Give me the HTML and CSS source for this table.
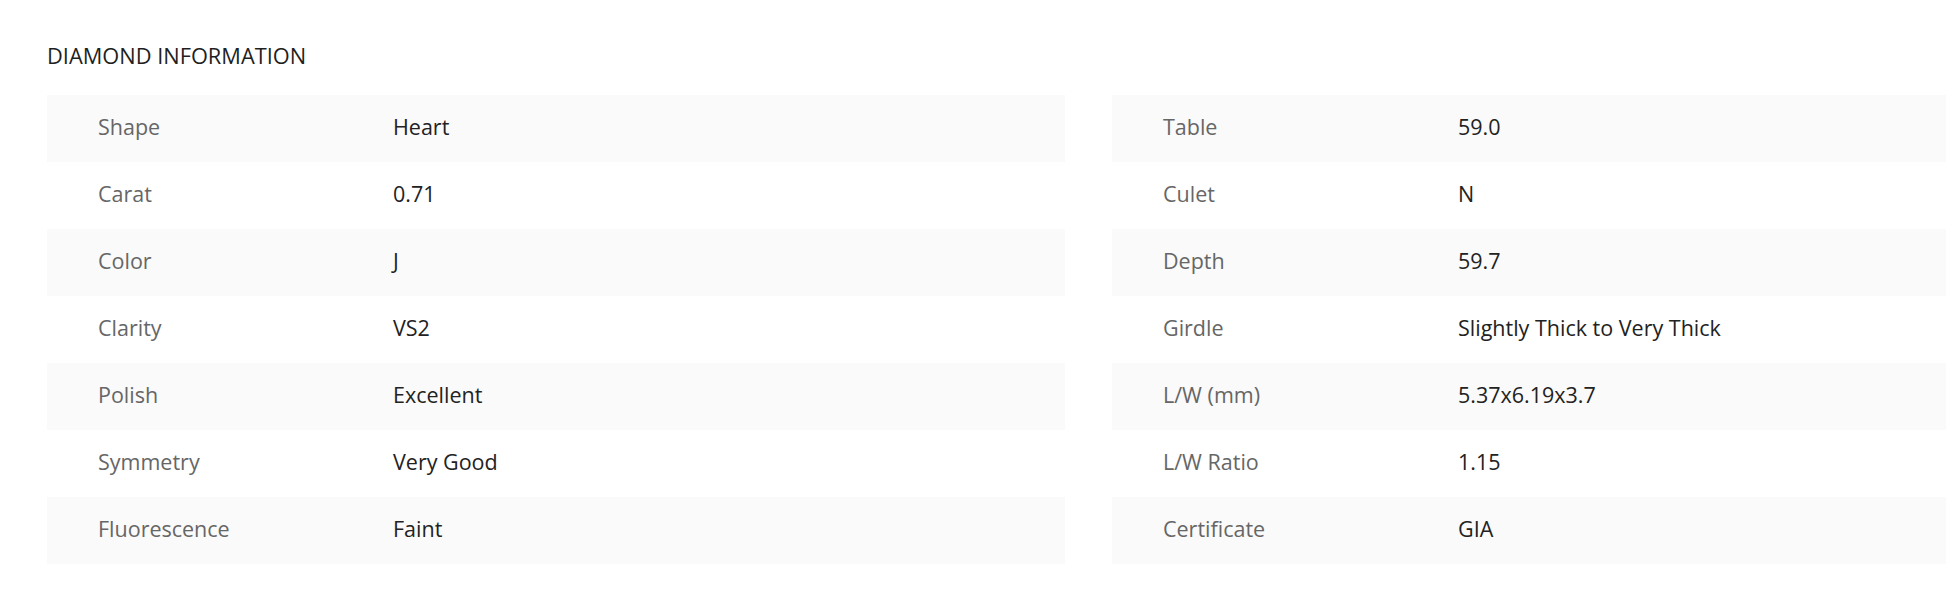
FILE: index.html
```html
<!DOCTYPE html>
<html lang="en">
<head>
<meta charset="utf-8">
<title>Diamond Information</title>
<link rel="stylesheet" href="styles.css">
</head>
<body>
<section class="info">
  <h2 class="info-title">DIAMOND INFORMATION</h2>
  <div class="info-grid">
    <div class="spec-table">
      <div class="spec-row"><span class="spec-label">Shape</span><span class="spec-value">Heart</span></div>
      <div class="spec-row"><span class="spec-label">Carat</span><span class="spec-value">0.71</span></div>
      <div class="spec-row"><span class="spec-label">Color</span><span class="spec-value">J</span></div>
      <div class="spec-row"><span class="spec-label">Clarity</span><span class="spec-value">VS2</span></div>
      <div class="spec-row"><span class="spec-label">Polish</span><span class="spec-value">Excellent</span></div>
      <div class="spec-row"><span class="spec-label">Symmetry</span><span class="spec-value">Very Good</span></div>
      <div class="spec-row"><span class="spec-label">Fluorescence</span><span class="spec-value">Faint</span></div>
    </div>
    <div class="spec-table">
      <div class="spec-row"><span class="spec-label">Table</span><span class="spec-value">59.0</span></div>
      <div class="spec-row"><span class="spec-label">Culet</span><span class="spec-value">N</span></div>
      <div class="spec-row"><span class="spec-label">Depth</span><span class="spec-value">59.7</span></div>
      <div class="spec-row"><span class="spec-label">Girdle</span><span class="spec-value">Slightly Thick to Very Thick</span></div>
      <div class="spec-row"><span class="spec-label">L/W (mm)</span><span class="spec-value">5.37x6.19x3.7</span></div>
      <div class="spec-row"><span class="spec-label">L/W Ratio</span><span class="spec-value">1.15</span></div>
      <div class="spec-row"><span class="spec-label">Certificate</span><span class="spec-value">GIA</span></div>
    </div>
  </div>
</section>
</body>
</html>
```

FILE: styles.css
```css
html, body {
  margin: 0;
  padding: 0;
  background: #ffffff;
  overflow: hidden;
}

body {
  font-family: "Open Sans", "Noto Sans", Lato, sans-serif;
  color: #222222;
}

.info {
  padding: 43px 0 0 47px;
}

.info-title {
  margin: 0 0 26px 0;
  font-size: 21.8px;
  font-weight: 400;
  line-height: 26px;
  color: #1f1f1f;
}

.info-grid {
  display: flex;
  gap: 47px;
}

.spec-table {
  flex: 0 0 1018px;
  display: flex;
  flex-direction: column;
}

.spec-table + .spec-table {
  flex: 1 1 0;
  min-width: 0;
}

.spec-row {
  display: flex;
  align-items: center;
  height: 67px;
  padding-left: 51px;
  padding-bottom: 4px;
  box-sizing: border-box;
  font-size: 21.5px;
  white-space: nowrap;
}

.spec-row:nth-child(odd) {
  background: #fafafa;
}

.spec-label {
  flex: 0 0 295px;
  color: #666666;
}

.spec-value {
  color: #222222;
}
```
